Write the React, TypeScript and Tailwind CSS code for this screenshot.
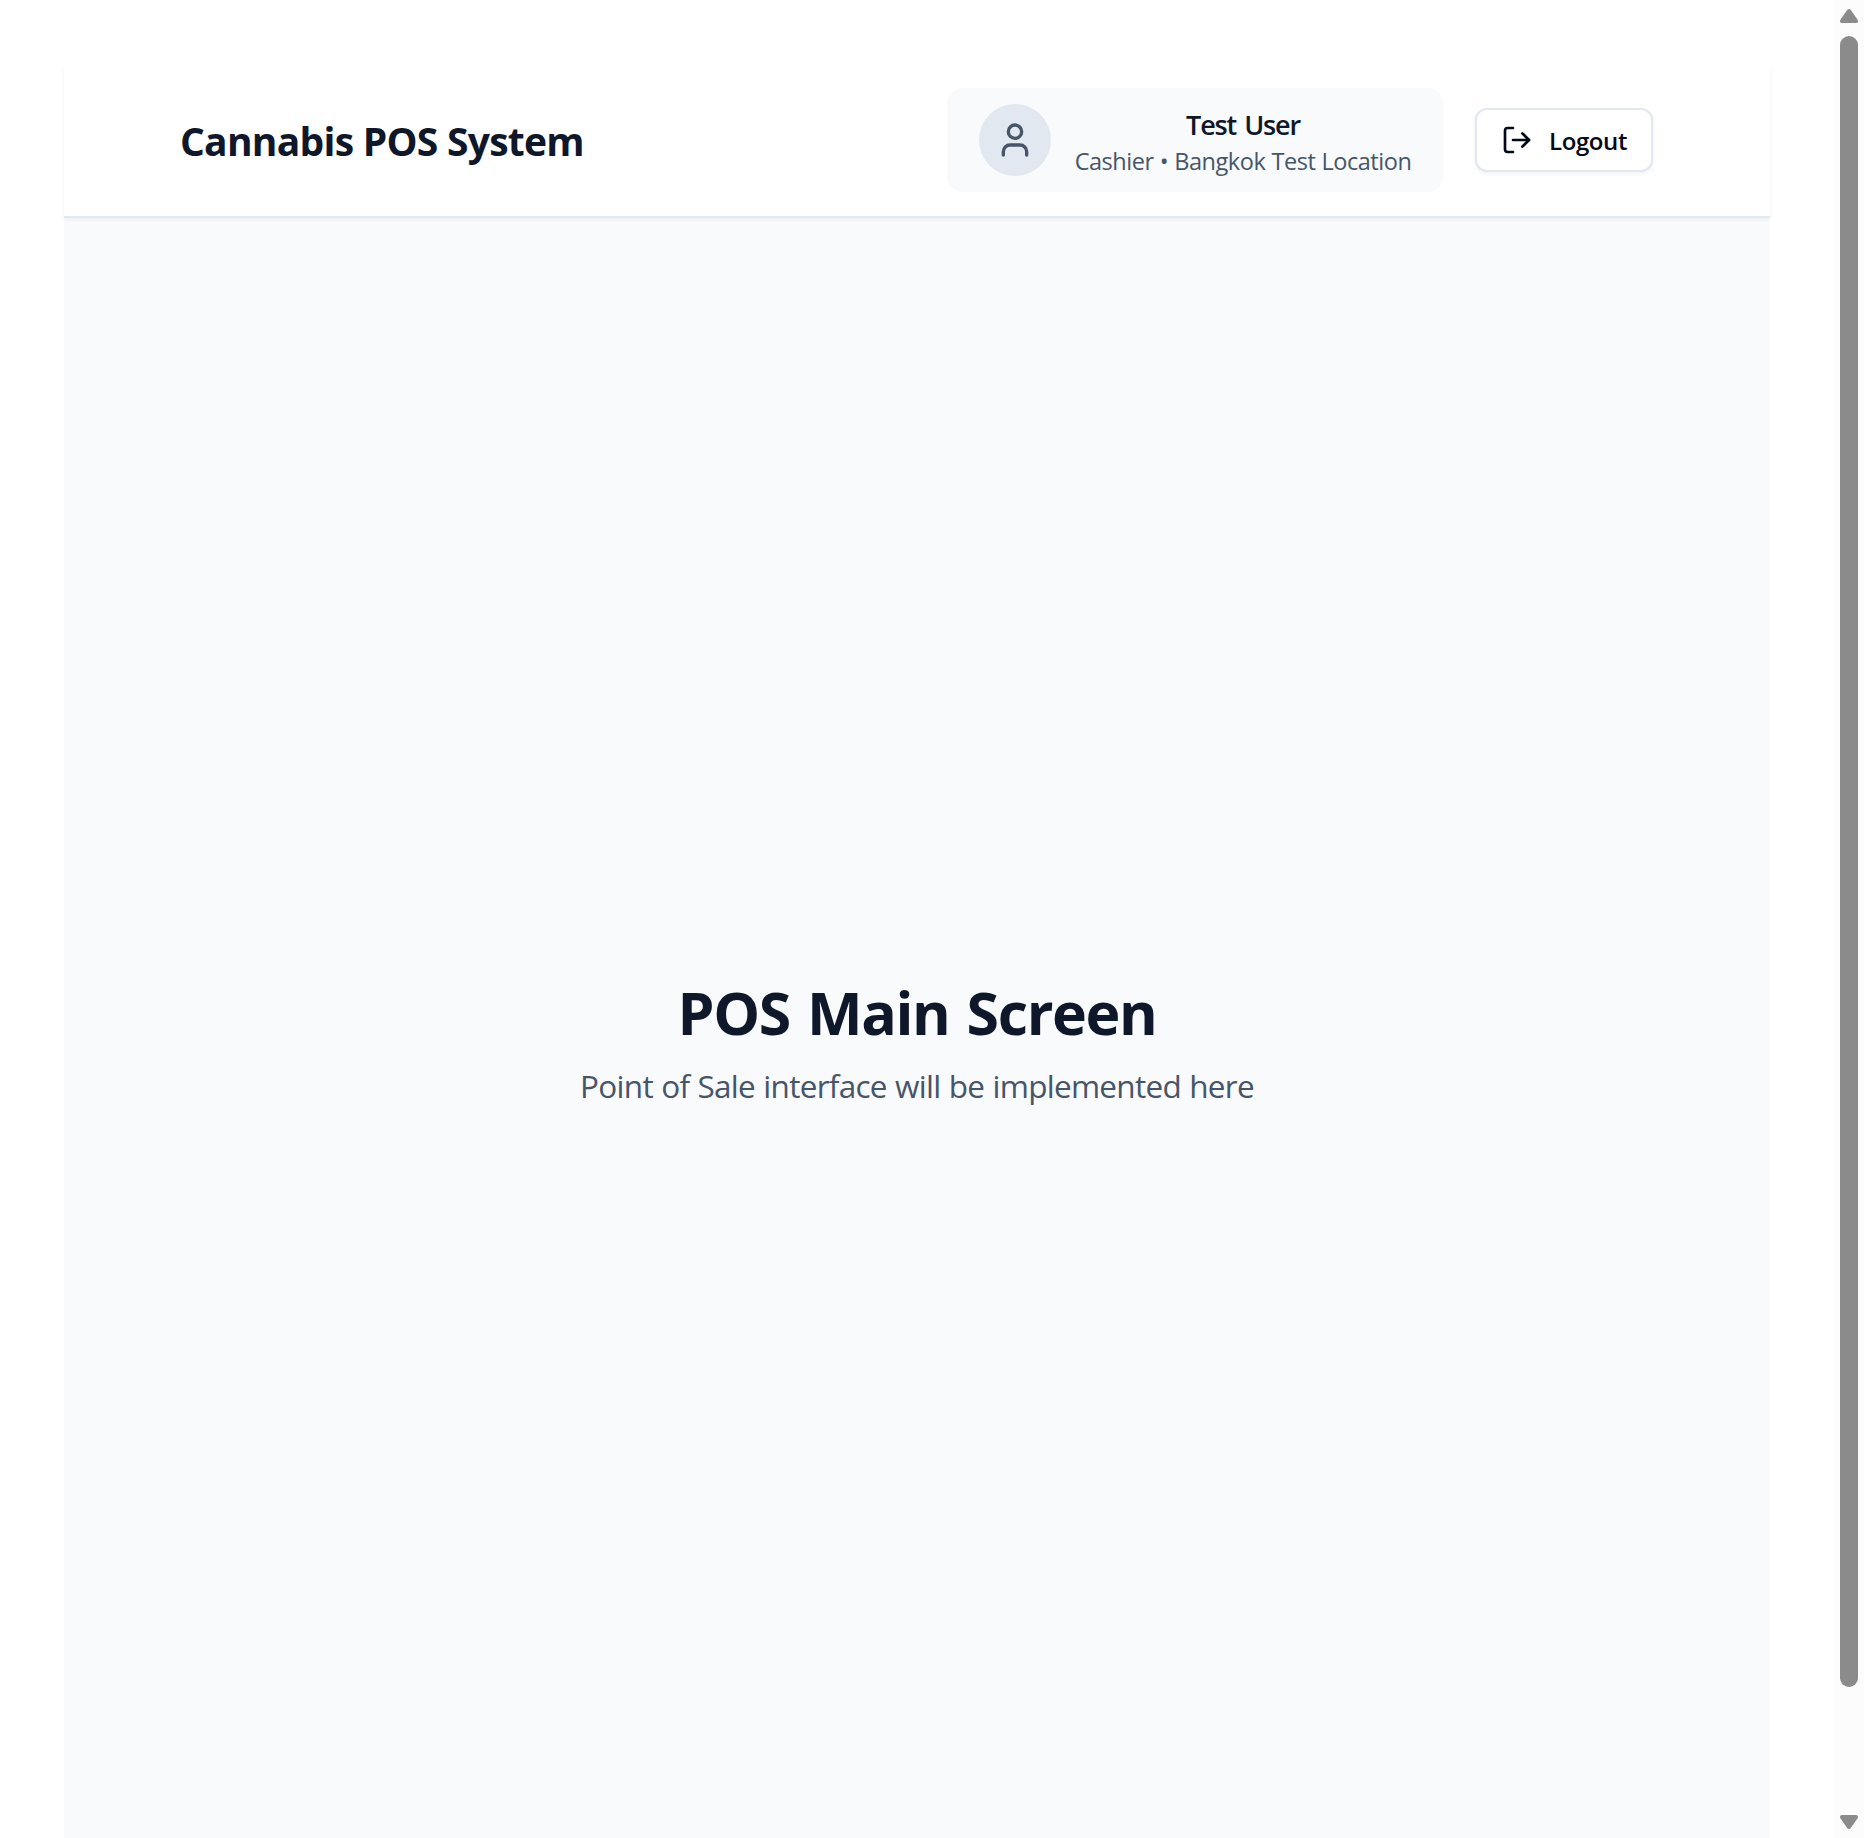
import { LogOut, User } from "lucide-react";

function Header() {
  return (
    <header className="relative z-10 h-[154px] shrink-0 border-b-2 border-[#e2e8f0] bg-white shadow-[0_2px_4px_0_rgba(0,0,0,0.05)]">
      <div className="mx-auto flex h-full w-[1472px] items-center justify-between">
        <h1 className="-ml-px pt-[2px] text-[39px] leading-[56px] font-bold tracking-[-0.73px] whitespace-nowrap text-[#0f172a]">
          Cannabis POS System
        </h1>
        <div className="flex items-center gap-8">
          <div className="flex h-[104px] w-[496px] items-center gap-6 rounded-[16px] bg-[#f8fafc] px-8">
            <div className="flex size-[72px] shrink-0 items-center justify-center rounded-full bg-[#e2e8f0]">
              <User size={40} className="text-[#475569]" />
            </div>
            <div className="flex w-[336px] flex-col items-center pt-[2px] whitespace-nowrap">
              <p className="text-[27px] leading-[40px] font-semibold tracking-[-1.2px] [word-spacing:2.5px] text-[#0f172a]">
                Test User
              </p>
              <p className="text-[23.5px] leading-[32px] tracking-[-0.46px] [word-spacing:0.5px] text-[#475569]">
                Cashier • Bangkok Test Location
              </p>
            </div>
          </div>
          <button className="flex h-16 w-[178px] items-center gap-4 rounded-[12px] border-2 border-[#e2e8f0] bg-white px-6 text-[24px] leading-[32px] font-semibold tracking-[-0.4px] text-[#020817] shadow-[0_2px_4px_0_rgba(0,0,0,0.05)]">
            <LogOut size={32} className="shrink-0" />
            <span className="pt-[2px] whitespace-nowrap">Logout</span>
          </button>
        </div>
      </div>
    </header>
  );
}

function Scrollbar() {
  return (
    <div className="flex h-full w-[30px] shrink-0 flex-col items-center bg-[#fcfcfc] pt-[9px] pb-[9px]">
      <svg width="18" height="14" viewBox="0 0 18 14" fill="#8b8b8b">
        <path d="M7 1.2Q9-1.2 11 1.2L17.6 10.8Q18.8 14 16 14H2Q-.8 14 .4 10.8Z" />
      </svg>
      <div className="mt-[13px] h-[1651px] w-[18px] rounded-full bg-[#8b8b8b]" />
      <svg className="mt-auto" width="18" height="14" viewBox="0 0 18 14" fill="#8b8b8b">
        <path d="M7 12.8Q9 15.2 11 12.8L17.6 3.2Q18.8 0 16 0H2Q-.8 0 .4 3.2Z" />
      </svg>
    </div>
  );
}

export default function App() {
  return (
    <div className="flex h-[1838px] w-[1864px] overflow-hidden bg-white font-['Open_Sans','Noto_Sans',sans-serif]">
      <div className="flex flex-1 flex-col pt-16 pr-16 pl-16">
        <Header />
        <main className="flex flex-1 flex-col items-center bg-[#f8fafc] pt-[758px] whitespace-nowrap">
          <h2 className="text-[59px] leading-[72px] font-bold tracking-[-1.35px] [word-spacing:3px] text-[#0f172a]">
            POS Main Screen
          </h2>
          <p className="mt-[14px] text-[31.5px] leading-[48px] tracking-[-0.72px] [word-spacing:0.8px] text-[#475569]">
            Point of Sale interface will be implemented here
          </p>
        </main>
      </div>
      <Scrollbar />
    </div>
  );
}
